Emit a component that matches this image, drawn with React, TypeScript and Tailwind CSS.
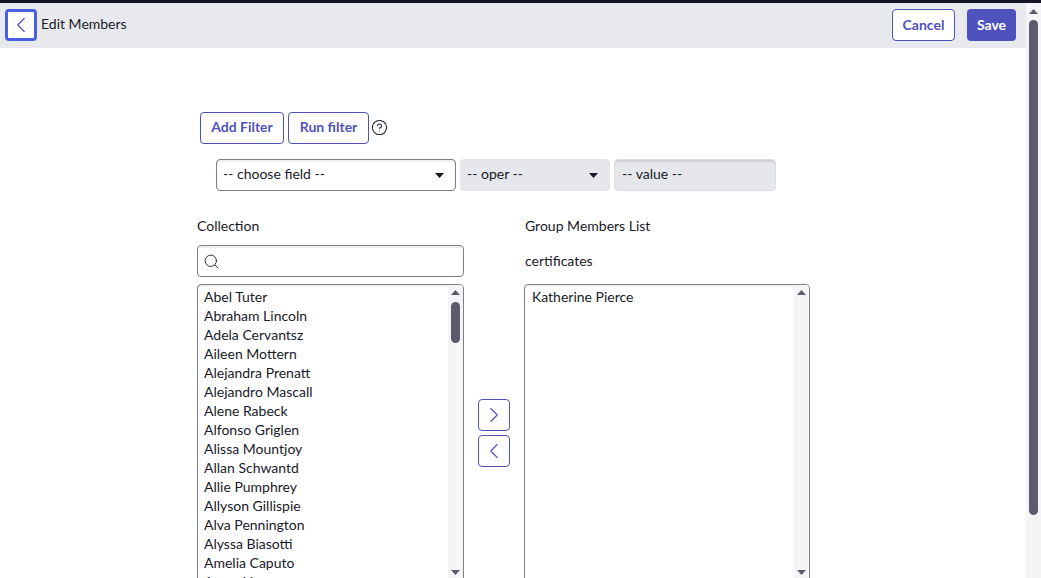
import { ChevronLeft, ChevronRight, CircleHelp, Search } from "lucide-react";

const people = [
  "Abel Tuter",
  "Abraham Lincoln",
  "Adela Cervantsz",
  "Aileen Mottern",
  "Alejandra Prenatt",
  "Alejandro Mascall",
  "Alene Rabeck",
  "Alfonso Griglen",
  "Alissa Mountjoy",
  "Allan Schwantd",
  "Allie Pumphrey",
  "Allyson Gillispie",
  "Alva Pennington",
  "Alyssa Biasotti",
  "Amelia Caputo",
  "Amos Linnan",
];

function Triangle({ down }: { down?: boolean }) {
  return (
    <svg width="9" height="5" viewBox="0 0 9 5" className="shrink-0 fill-[#5b5b6d]">
      <path d={down ? "M0 0h9L4.5 5z" : "M0 5h9L4.5 0z"} />
    </svg>
  );
}

function Scrollbar({ thumb }: { thumb?: boolean }) {
  return (
    <div className="flex w-[15px] shrink-0 flex-col items-center bg-[#f5f5f7] pt-[5px] pb-[8px]">
      <Triangle />
      {thumb && <div className="mt-[7px] h-[41px] w-[9px] rounded-full bg-[#5b5b6d]" />}
      <div className="flex-1" />
      <Triangle down />
    </div>
  );
}

function FilterSelect({ label, disabled }: { label: string; disabled?: boolean }) {
  return (
    <div
      className={
        disabled
          ? "flex h-8 w-[150px] items-center justify-between rounded-[4px] bg-[#e6e7eb] pr-[12px] pl-[7px]"
          : "flex h-8 w-[240px] items-center justify-between rounded-[4px] border border-[#7b8089] pr-[11px] pl-[6px] shadow-[inset_0_2px_0_#eeeff1]"
      }
    >
      <span className="mb-[4px]">{label}</span>
      <svg width="9" height="5" viewBox="0 0 9 5" className="fill-[#181a2a]">
        <path d="M0 0h9L4.5 5z" />
      </svg>
    </div>
  );
}

function MoveButton({ children }: { children: React.ReactNode }) {
  return (
    <button className="flex h-8 w-8 items-center justify-center rounded-[4px] border border-[#4f52bd] text-[#4f52bd]">
      {children}
    </button>
  );
}

export default function App() {
  return (
    <div className="flex h-[578px] flex-col overflow-hidden bg-white font-['Lato',sans-serif] text-[14px] text-[#181a2a]">
      <div className="h-[3px] shrink-0 bg-[#15152a]" />
      <div className="flex min-h-0 flex-1">
        <div className="min-w-0 flex-1">
          <header className="flex h-[45px] items-start justify-between bg-[#e8e9ec] pt-[6px] pr-[10px] pl-[5px]">
            <div className="flex items-center gap-[4px]">
              <button className="flex h-8 w-8 items-center justify-center rounded-[4px] border-[3px] border-[#4a5fe0] bg-white text-[#4f52bd]">
                <ChevronLeft size={26} strokeWidth={1} />
              </button>
              <span className="mb-[3px]">Edit Members</span>
            </div>
            <div className="flex gap-3">
              <button className="h-8 w-[63px] rounded-[4px] border border-[#4f52bd] bg-white pb-[2px] font-bold text-[#4f52bd]">
                Cancel
              </button>
              <button className="h-8 w-[49px] rounded-[4px] bg-[#4f52bd] pb-[2px] font-bold text-white">
                Save
              </button>
            </div>
          </header>

          <main className="pt-[64px] pl-[197px]">
            <div className="flex items-center gap-1 pl-[3px]">
              <button className="h-8 w-[84px] rounded-[4px] border border-[#4f52bd] pb-[4px] font-bold text-[#4f52bd]">
                Add Filter
              </button>
              <button className="h-8 w-[81px] rounded-[4px] border border-[#4f52bd] pb-[4px] font-bold text-[#4f52bd]">
                Run filter
              </button>
              <CircleHelp size={17} strokeWidth={1.5} className="-ml-[2px] mb-[2px]" />
            </div>

            <div className="mt-[15px] flex gap-1 pl-[19px]">
              <FilterSelect label="-- choose field --" />
              <FilterSelect label="-- oper --" disabled />
              <div className="flex h-8 w-[162px] items-center rounded-[4px] border border-[#dcdde1] bg-[#e6e7eb] pl-[7px] shadow-[inset_0_2px_0_#cfd0d4]">
                <span className="mb-[3px]">-- value --</span>
              </div>
            </div>

            <div className="mt-[24px] flex">
              <section className="w-[267px] shrink-0">
                <div className="flex h-[21px] items-center">Collection</div>
                <div className="mt-[9px] flex h-8 items-center rounded-[4px] border border-[#7b8089] pl-[5px] shadow-[inset_0_2px_0_#eeeff1]">
                  <Search size={17} strokeWidth={1.25} />
                </div>
                <div className="mt-[7px] flex h-[300px] overflow-hidden rounded-[4px] border border-[#7b8089] shadow-[inset_0_2px_0_#eeeff1]">
                  <ul className="min-w-0 flex-1 pt-[2px] pl-[6px] leading-[19px]">
                    {people.map((name) => (
                      <li key={name}>{name}</li>
                    ))}
                  </ul>
                  <Scrollbar thumb />
                </div>
              </section>

              <div className="flex w-[60px] shrink-0 flex-col gap-1 pt-[184px] pl-[14px]">
                <MoveButton>
                  <ChevronRight size={26} strokeWidth={1} />
                </MoveButton>
                <MoveButton>
                  <ChevronLeft size={26} strokeWidth={1} />
                </MoveButton>
              </div>

              <section className="w-[286px] shrink-0">
                <div className="flex h-[21px] items-center pl-[1px]">Group Members List</div>
                <div className="mt-[14px] flex h-[21px] items-center pl-[1px]">certificates</div>
                <div className="mt-[13px] flex h-[300px] overflow-hidden rounded-[4px] border border-[#7b8089] shadow-[inset_0_2px_0_#eeeff1]">
                  <ul className="min-w-0 flex-1 pt-[2px] pl-[7px] leading-[19px]">
                    <li>Katherine Pierce</li>
                  </ul>
                  <Scrollbar />
                </div>
              </section>
            </div>
          </main>
        </div>

        <aside className="flex w-[15px] shrink-0 flex-col items-center bg-[#f5f5f7] pt-[6px]">
          <Triangle />
          <div className="mt-[6px] h-[495px] w-[9px] rounded-full bg-[#5b5b6d]" />
        </aside>
      </div>
    </div>
  );
}
